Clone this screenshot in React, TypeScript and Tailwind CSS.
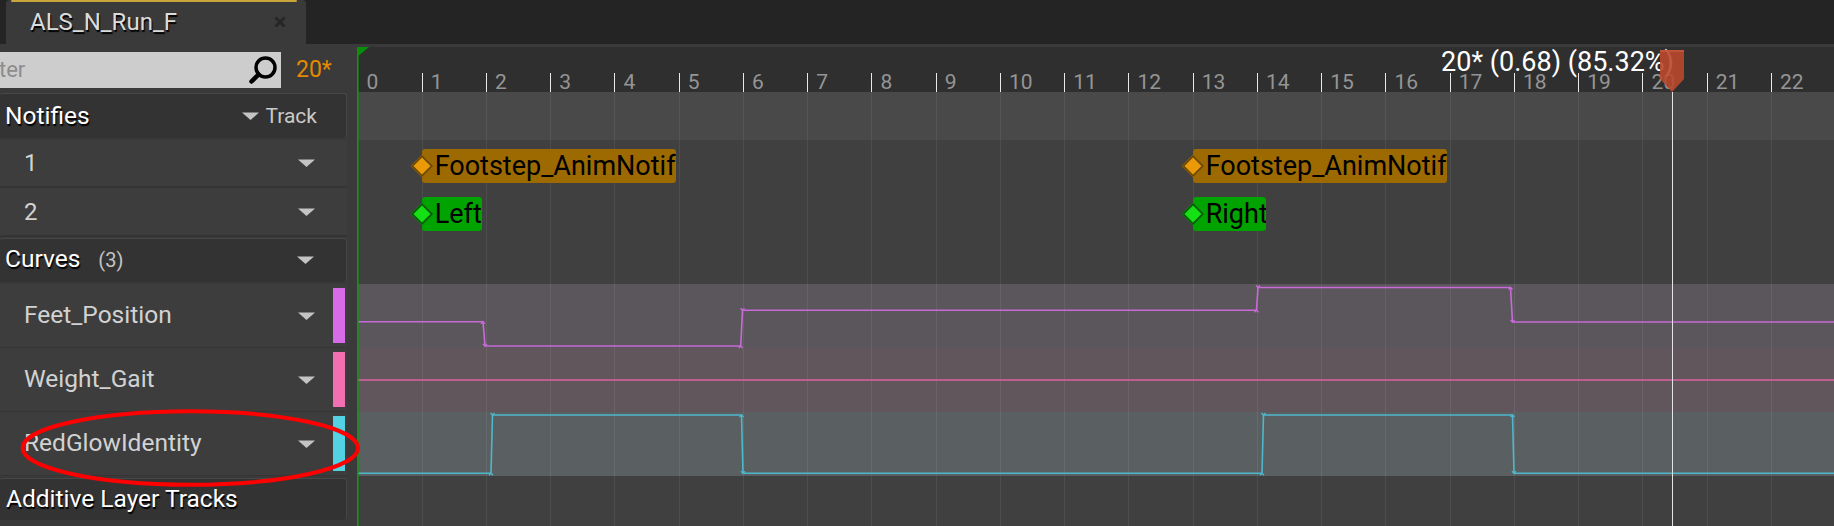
import React from "react";

const FW = 64.25;
const X0 = 0.4;
const fx = (n: number) => X0 + FW * n;
const TW = 1477;
const TH = 479;

function Tri() {
  return (
    <svg width="17" height="8" viewBox="0 0 17 8" className="shrink-0">
      <polygon points="0,0.5 17,0.5 8.5,8" fill="#c4c4c4" />
    </svg>
  );
}

const frames = Array.from({ length: 23 }, (_, i) => i);

const purple =
  "M0 274.7 H126 L128 299 H383.7 L385.5 263.3 H899.5 L901 240.5 H1153.5 L1155.5 275 H1477";
const teal =
  "M0 426.3 H134 L135.5 368 H384.5 L386 426.3 H905 L906.5 368 H1155.5 L1157 426.3 H1477";

const purpleKeys: [number, number, number][] = [
  [126, 274.7, 1],
  [128, 299, -1],
  [383.7, 299, 1],
  [385.5, 263.3, -1],
  [899.5, 263.3, 1],
  [901, 240.5, -1],
  [1153.5, 240.5, 1],
  [1155.5, 275, -1],
];
const tealKeys: [number, number, number][] = [
  [134, 426.3, 1],
  [135.5, 368, -1],
  [384.5, 368, 1],
  [386, 426.3, -1],
  [905, 426.3, 1],
  [906.5, 368, -1],
  [1155.5, 368, 1],
  [1157, 426.3, -1],
];

function Notify({
  left,
  top,
  width,
  label,
  kind,
}: {
  left: number;
  top: number;
  width: number;
  label: string;
  kind: "orange" | "green";
}) {
  const bar = kind === "orange" ? "bg-[#9c6a00]" : "bg-[#00a300]";
  const dia =
    kind === "orange"
      ? "bg-[#ea9a08] border-[#6c4806]"
      : "bg-[#14e014] border-[#0a5c0a]";
  return (
    <div className="absolute" style={{ left, top, width, height: 34 }}>
      <div
        className={`w-full h-full ${bar} rounded-[3px] overflow-hidden flex items-center pl-[13px]`}
      >
        <span className="text-[27px] leading-none text-black whitespace-nowrap">
          {label}
        </span>
      </div>
      <div
        className={`absolute left-[-8px] top-[9px] w-[16px] h-[16px] rotate-45 border-2 ${dia}`}
      />
    </div>
  );
}

export default function App() {
  return (
    <div className="relative w-[1834px] h-[526px] overflow-hidden bg-[#3a3a3a] font-['Roboto',sans-serif] select-none">
      {/* Tab bar */}
      <div className="h-[44px] bg-[#242424] flex items-end">
        <div className="ml-[6px] w-[300px] h-[44px] bg-[#3a3a3a] rounded-t-[4px] flex flex-col">
          <div className="h-[2px] ml-[5px] mr-[9px] bg-[#c8a63c] rounded-full" />
          <div className="flex-1 flex items-center pl-[24px] pr-[20px] pb-[3px]">
            <span className="flex-1 text-[24px] leading-none text-[#dcdcdc] [text-shadow:1px_2px_1px_#000]">
              ALS_N_Run_F
            </span>
            <svg width="12" height="12" viewBox="0 0 12 12">
              <path
                d="M1.5 1.5 L10.5 10.5 M10.5 1.5 L1.5 10.5"
                stroke="#262626"
                strokeWidth="3"
              />
            </svg>
          </div>
        </div>
      </div>

      {/* Body */}
      <div className="pt-[3px] flex">
        {/* Left column */}
        <div className="w-[357px] shrink-0 flex flex-col">
          {/* ruler row */}
          <div className="h-[45px] flex items-center">
            <div className="w-[281px] h-[36px] bg-[#cdcdcd] flex items-center justify-between">
              <span className="text-[22px] leading-none text-[#8c8c8c] ml-[-1px]">
                ter
              </span>
              <svg width="32" height="32" viewBox="0 0 32 32" className="mr-[2px]">
                <circle cx="18.5" cy="13.5" r="9.5" stroke="#000" strokeWidth="3.5" fill="none" />
                <path d="M11.5 20.5 L4.5 27.5" stroke="#000" strokeWidth="4.5" strokeLinecap="round" />
              </svg>
            </div>
            <span className="ml-[15px] text-[23px] leading-none text-[#e58a00]">
              20*
            </span>
          </div>

          {/* Notifies header */}
          <div className="h-[48px] pt-[1px]">
            <div className="w-[347px] h-[45px] bg-[#333333] rounded-[3px] border-t border-r border-[#474747] flex items-center justify-between pl-[5px] pr-[29px]">
              <span className="text-[24.5px] leading-none text-white [text-shadow:1px_2px_1px_#000]">
                Notifies
              </span>
              <div className="flex items-center gap-[6px]">
                <Tri />
                <span className="text-[21px] leading-none text-[#cacaca]">Track</span>
              </div>
            </div>
          </div>

          {/* Notify tracks */}
          <div className="h-[48px] w-[347px] bg-[#3d3d3d] border-b-2 border-[#343434] flex items-center pl-[24px] pr-[32px]">
            <span className="flex-1 text-[24px] leading-none text-[#d2d2d2]">1</span>
            <Tri />
          </div>
          <div className="h-[49px] w-[347px] bg-[#3d3d3d] border-b-2 border-[#343434] flex items-center pl-[24px] pr-[32px]">
            <span className="flex-1 text-[24px] leading-none text-[#d2d2d2]">2</span>
            <Tri />
          </div>

          {/* Curves header */}
          <div className="h-[47px] pt-[1px]">
            <div className="w-[347px] h-[44px] bg-[#333333] rounded-[3px] border-t border-r border-[#474747] flex items-center pl-[5px] pr-[32px] pb-[2px]">
              <span className="text-[24.5px] leading-none text-white [text-shadow:1px_2px_1px_#000]">
                Curves
              </span>
              <span className="ml-[18px] flex-1 text-[20px] leading-none text-[#c4c4c4]">
                (3)
              </span>
              <Tri />
            </div>
          </div>

          {/* Curve rows */}
          {[
            { name: "Feet_Position", color: "bg-[#d66ce8]" },
            { name: "Weight_Gait", color: "bg-[#f26fb2]" },
            { name: "RedGlowIdentity", color: "bg-[#52d2e2]" },
          ].map((c) => (
            <div
              key={c.name}
              className="h-[64px] w-[347px] bg-[#3d3d3d] border-b border-[#353535] flex items-center pl-[24px] pr-[2px]"
            >
              <span className="flex-1 text-[24.5px] leading-none text-[#d2d2d2]">
                {c.name}
              </span>
              <Tri />
              <div className={`ml-[18px] w-[12px] h-[55px] ${c.color}`} />
            </div>
          ))}

          {/* Additive header */}
          <div className="h-[50px] pt-[2px]">
            <div className="w-[347px] h-[42px] bg-[#333333] rounded-[3px] border-t border-r border-[#474747] flex items-center pl-[6px]">
              <span className="text-[24.5px] leading-none text-white [text-shadow:1px_2px_1px_#000]">
                Additive Layer Tracks
              </span>
            </div>
          </div>
        </div>

        {/* Timeline column */}
        <div className="relative flex-1 flex flex-col">
          <div className="h-[45px] bg-[#2f2f2f]" />
          <div className="h-[48px] bg-[#494949]" />
          <div className="h-[48px] bg-[#404040]" />
          <div className="h-[49px] bg-[#404040]" />
          <div className="h-[47px] bg-[#404040]" />
          <div className="h-[64px] bg-[#5b565c]" />
          <div className="h-[64px] bg-[#60565b]" />
          <div className="h-[64px] bg-[#5a5f61]" />
          <div className="h-[50px] bg-[#404040]" />

          {/* grid, ticks, curves */}
          <svg
            className="absolute left-0 top-0"
            width={TW}
            height={TH}
            viewBox={`0 0 ${TW} ${TH}`}
          >
            {frames.slice(1).map((n) => {
              const x = Math.round(fx(n)) + 0.5;
              return (
                <g key={n}>
                  <line x1={x} y1={45} x2={x} y2={TH} stroke="#ffffff" strokeOpacity="0.07" />
                  <line x1={x} y1={26} x2={x} y2={45} stroke="#e8e8e8" />
                </g>
              );
            })}
            <line x1="0" y1="333" x2={TW} y2="333" stroke="#dc62a2" strokeWidth="1.6" />
            <path d={purple} stroke="#c86ad8" strokeWidth="1.6" fill="none" />
            <path d={teal} stroke="#4db8cc" strokeWidth="1.6" fill="none" />
            {purpleKeys.map(([x, y, d], i) => (
              <path
                key={"p" + i}
                d={`M${x - 2} ${y + 2 * d} L${x} ${y} L${x + 2} ${y + 2 * d}`}
                stroke="#c86ad8"
                strokeWidth="1.4"
                fill="none"
              />
            ))}
            {tealKeys.map(([x, y, d], i) => (
              <path
                key={"t" + i}
                d={`M${x - 2} ${y + 2 * d} L${x} ${y} L${x + 2} ${y + 2 * d}`}
                stroke="#4db8cc"
                strokeWidth="1.4"
                fill="none"
              />
            ))}
            <rect x="0" y="0" width="1.6" height={TH} fill="#0a9a0a" />
            <polygon points="0,0 12,0 0,10" fill="#0a8f0a" />
          </svg>

          {/* ruler labels */}
          {frames.map((n) => (
            <span
              key={n}
              className="absolute top-[25.5px] text-[21px] leading-[18px] text-[#959595]"
              style={{ left: fx(n) + 9 }}
            >
              {n}
            </span>
          ))}

          {/* notifies */}
          <Notify left={fx(1)} top={102} width={254} label="Footstep_AnimNotify" kind="orange" />
          <Notify left={fx(1)} top={150} width={60} label="Left" kind="green" />
          <Notify left={fx(13)} top={102} width={254} label="Footstep_AnimNotify" kind="orange" />
          <Notify left={fx(13)} top={150} width={73} label="Right" kind="green" />

          {/* scrubber text */}
          <span className="absolute top-[4.5px] right-[160px] text-[27px] leading-[20px] text-white whitespace-nowrap">
            20* (0.68) (85.32%)
          </span>

          {/* scrubber */}
          <svg
            className="absolute left-0 top-0"
            width={TW}
            height={TH}
            viewBox={`0 0 ${TW} ${TH}`}
          >
            <line x1="1315.5" y1="45" x2="1315.5" y2={TH} stroke="#e4e4e4" strokeWidth="1" />
            <polygon
              points="1303,3 1327,3 1327,32 1315,45 1303,32"
              fill="#b9492e"
              fillOpacity="0.9"
            />
            <polygon points="1303,3 1327,3 1327,5 1303,5" fill="#c85a3e" fillOpacity="0.7" />
          </svg>
        </div>
      </div>

      {/* annotation */}
      <svg className="absolute left-0 top-0 pointer-events-none" width="1834" height="526">
        <ellipse cx="190.3" cy="448" rx="167.7" ry="36.7" stroke="#ff0000" strokeWidth="4" fill="none" />
      </svg>
    </div>
  );
}
